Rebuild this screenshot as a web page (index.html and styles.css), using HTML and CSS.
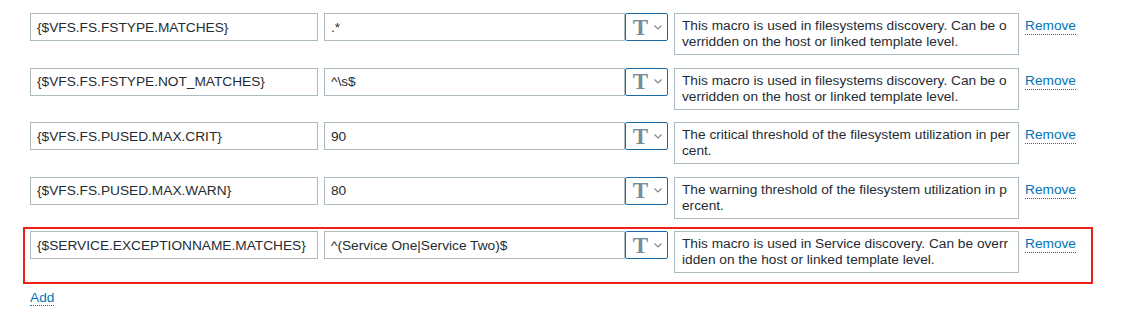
FILE: index.html
```html
<!DOCTYPE html>
<html lang="en">
<head>
    <meta charset="UTF-8">
    <meta name="viewport" content="width=device-width, initial-scale=1.0">
    <title>Macros</title>
    <link rel="stylesheet" href="styles.css">
</head>
<body>
    <div class="macros">
        <div class="macro-row">
            <input type="text" class="macro-name" value="{$VFS.FS.FSTYPE.MATCHES}">
            <div class="macro-value">
                <input type="text" class="value-input" value=".*">
                <button class="type-btn"><span class="type-t">T</span><svg width="8" height="5" viewBox="0 0 8 5"><polyline points="0.5,0.5 4,4 7.5,0.5" fill="none" stroke="#768d99" stroke-width="1.2"/></svg></button>
            </div>
            <textarea class="macro-desc">This macro is used in filesystems discovery. Can be overridden on the host or linked template level.</textarea>
            <a href="#" class="link-action">Remove</a>
        </div>
        <div class="macro-row">
            <input type="text" class="macro-name" value="{$VFS.FS.FSTYPE.NOT_MATCHES}">
            <div class="macro-value">
                <input type="text" class="value-input" value="^\s$">
                <button class="type-btn"><span class="type-t">T</span><svg width="8" height="5" viewBox="0 0 8 5"><polyline points="0.5,0.5 4,4 7.5,0.5" fill="none" stroke="#768d99" stroke-width="1.2"/></svg></button>
            </div>
            <textarea class="macro-desc">This macro is used in filesystems discovery. Can be overridden on the host or linked template level.</textarea>
            <a href="#" class="link-action">Remove</a>
        </div>
        <div class="macro-row">
            <input type="text" class="macro-name" value="{$VFS.FS.PUSED.MAX.CRIT}">
            <div class="macro-value">
                <input type="text" class="value-input" value="90">
                <button class="type-btn"><span class="type-t">T</span><svg width="8" height="5" viewBox="0 0 8 5"><polyline points="0.5,0.5 4,4 7.5,0.5" fill="none" stroke="#768d99" stroke-width="1.2"/></svg></button>
            </div>
            <textarea class="macro-desc">The critical threshold of the filesystem utilization in percent.</textarea>
            <a href="#" class="link-action">Remove</a>
        </div>
        <div class="macro-row">
            <input type="text" class="macro-name" value="{$VFS.FS.PUSED.MAX.WARN}">
            <div class="macro-value">
                <input type="text" class="value-input" value="80">
                <button class="type-btn"><span class="type-t">T</span><svg width="8" height="5" viewBox="0 0 8 5"><polyline points="0.5,0.5 4,4 7.5,0.5" fill="none" stroke="#768d99" stroke-width="1.2"/></svg></button>
            </div>
            <textarea class="macro-desc">The warning threshold of the filesystem utilization in percent.</textarea>
            <a href="#" class="link-action">Remove</a>
        </div>
        <div class="macro-row highlighted">
            <input type="text" class="macro-name" value="{$SERVICE.EXCEPTIONNAME.MATCHES}">
            <div class="macro-value">
                <input type="text" class="value-input" value="^(Service One|Service Two)$">
                <button class="type-btn"><span class="type-t">T</span><svg width="8" height="5" viewBox="0 0 8 5"><polyline points="0.5,0.5 4,4 7.5,0.5" fill="none" stroke="#768d99" stroke-width="1.2"/></svg></button>
            </div>
            <textarea class="macro-desc">This macro is used in Service discovery. Can be overridden on the host or linked template level.</textarea>
            <a href="#" class="link-action">Remove</a>
        </div>
        <div class="add-row">
            <a href="#" class="link-action">Add</a>
        </div>
    </div>
</body>
</html>
```

FILE: styles.css
```css
body {
    margin: 0;
    background: #fff;
    font-family: "Liberation Sans", Arial, sans-serif;
    font-size: 13.7px;
    color: #1f2c33;
}
.macros {
    width: 1056px;
    padding: 13px 0 0 30px;
}
.macro-row {
    display: flex;
    align-items: flex-start;
    gap: 6px;
    margin-bottom: 12.5px;
}
.macro-row.highlighted {
    margin: -4px -7px 0 -7px;
    padding: 2px 5px 9px 5px;
    border: 2px solid #ec2118;
}
input, textarea, button {
    font-family: inherit;
    font-size: 13.7px;
    color: #1f2c33;
    box-sizing: border-box;
    margin: 0;
}
.macro-name, .value-input {
    height: 28px;
    border: 1px solid #acbbc2;
    padding: 0 6px;
    background: #fff;
    outline: none;
}
.macro-name {
    width: 288px;
}
.macro-value {
    display: flex;
}
.value-input {
    width: 301px;
}
.type-btn {
    width: 43px;
    height: 28px;
    border: 1px solid #1a6aa6;
    border-radius: 2px;
    background: #fff;
    display: flex;
    align-items: center;
    justify-content: center;
    gap: 6px;
    padding: 0 0 0 2px;
}
.type-t {
    font-family: "Liberation Serif", "Times New Roman", serif;
    font-weight: bold;
    font-size: 23px;
    line-height: 24px;
    color: #768d99;
    margin-top: 1px;
}
.macro-desc {
    width: 345px;
    height: 42px;
    border: 1px solid #acbbc2;
    padding: 4px 7px;
    line-height: 16px;
    resize: none;
    overflow: hidden;
    word-break: break-all;
    outline: none;
}
.link-action {
    color: #0275b8;
    text-decoration: none;
    border-bottom: 1px dotted #0275b8;
    line-height: 16px;
    margin-top: 5px;
}
.add-row {
    padding-top: 6px;
    line-height: 16px;
}
```
